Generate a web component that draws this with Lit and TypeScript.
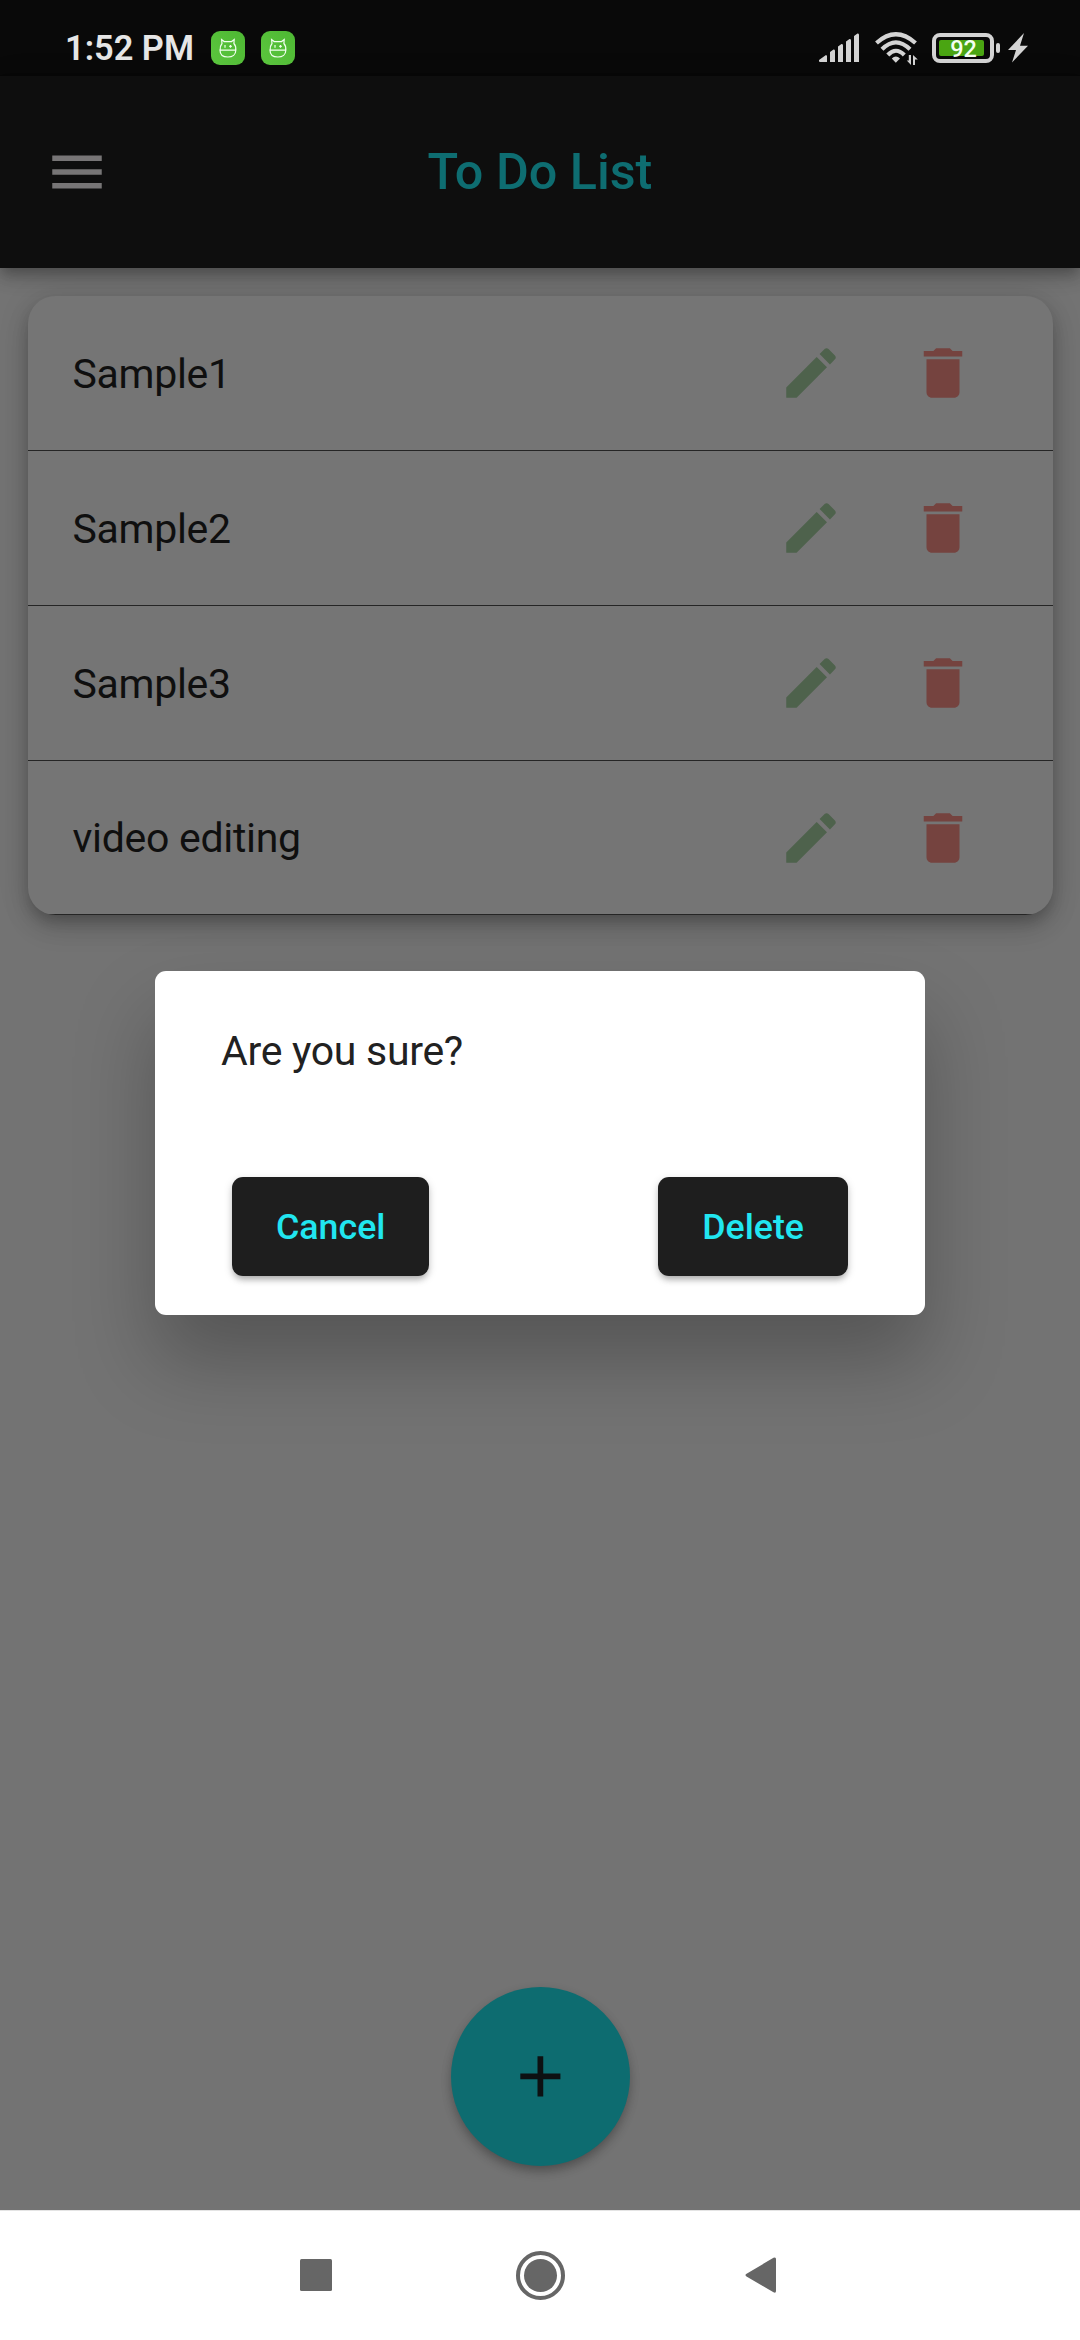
import { LitElement, html, css, svg } from "lit";
import { customElement, property } from "lit/decorators.js";

const critter = svg`
  <path d="M9.200 19.200C8.800 16.500 9.600 14.200 11 12.500L10.600 8.600L13.200 10.600H20.600L23.200 8.600L22.900 12.500C24.400 14.200 25.100 16.500 24.700 19.200"/>
  <path d="M8.500 19.200H25.300M9 19.200C9 23.500 12.200 26 16.900 26S24.800 23.500 24.800 19.200"/>
  <path d="M14 14V16.800M19.500 14V16.800M18.200 15.400H20.800"/>`;

@customElement("status-bar")
class StatusBar extends LitElement {
  static styles = css`
    :host {
      display: flex;
      align-items: center;
      height: 76px;
      box-sizing: border-box;
      padding: 19px 52px 0 65px;
      background: #090909;
      font-family: Roboto, sans-serif;
    }
    .time {
      width: 146px;
      font-size: 34.4px;
      font-weight: 600;
      line-height: 40px;
      color: #e6e6e6;
      white-space: nowrap;
    }
    .apps { display: flex; gap: 16px; flex: 1; }
    .app { display: block; width: 34px; height: 34px; border-radius: 9px; background: linear-gradient(225deg, #4db733, #5dc83f); }
    .app svg { display: block; }
    .system { display: flex; align-items: center; height: 40px; }
    .system svg { display: block; }
    .signal { margin-right: 15px; }
    .wifi { margin-right: 14px; }
    .battery { display: flex; align-items: center; }
    .cell {
      width: 62px; height: 30px; box-sizing: border-box;
      border: 4px solid #d4d4d4; border-radius: 8px; padding: 3px;
    }
    .level {
      width: 45px; height: 16px; border-radius: 2px; background: #4aa512;
      color: #f4fff0; font-size: 23.5px; font-weight: 500; line-height: 18px;
      display: flex; justify-content: center; padding-left: 4px; box-sizing: border-box;
    }
    .tip { width: 4px; height: 10px; margin-left: 2px; border-radius: 2px; background: #d4d4d4; }
    .bolt { margin-left: 8px; }
  `;
  render() {
    return html`
      <span class="time">1:52 PM</span>
      <span class="apps">
        ${[0, 1].map(() => html`<span class="app"><svg width="34" height="34" viewBox="0 0 34 34" fill="none" stroke="#f2fff0" stroke-width="1.200">${critter}</svg></span>`)}
      </span>
      <span class="system">
        <svg class="signal" width="41" height="30" viewBox="0 0 41 30" fill="#d4d4d4">
          <path d="M0 27L7 22Q8 22 8 23.500V29H1Q0 29 0 28zM11 19L14.500 16.500Q16 16 16 18V29H11zM19 13.500L22.500 11Q24 10.500 24 12.500V29H19zM27 8.500L30.500 6Q32 5.500 32 7.500V29H27zM35 3L38.500 .5Q40 0 40 2V29H35z"/>
        </svg>
        <svg class="wifi" width="43" height="34" viewBox="0 0 43 34">
          <g fill="none" stroke="#d4d4d4" stroke-width="4.200">
            <path d="M1.500 12Q20.800-5.500 40.500 12"/>
            <path d="M7 18.300Q20.800 4.500 35 18.300"/>
            <path d="M12.800 24Q20.800 15.500 29.300 24"/>
          </g>
          <path d="M16.800 27.500Q20.800 23.300 25 27.500L20.800 31.700z" fill="#d4d4d4"/>
          <path d="M36 24V34L31.800 29.500H33.800V24zM38 34V24L42.800 28.500H40V34z" fill="#d4d4d4"/>
        </svg>
        <span class="battery"><span class="cell"><span class="level">92</span></span><span class="tip"></span></span>
        <svg class="bolt" width="20" height="30" viewBox="0 0 20 30"><path d="M16 0L0 17H8L4 29.500L20 12.800H12z" fill="#d4d4d4"/></svg>
      </span>`;
  }
}

@customElement("todo-item")
class TodoItem extends LitElement {
  @property() label = "";
  static styles = css`
    :host {
      display: flex;
      align-items: center;
      box-sizing: border-box;
      height: 155px;
      padding: 0 77px 0 45px;
      border-bottom: 1px solid #252525;
      font-family: Roboto, sans-serif;
    }
    :host(:last-of-type) { height: 154px; }
    .label { flex: 1; font-size: 41px; letter-spacing: -0.3px; line-height: 48px; color: #0f0f0f; padding-top: 1px; }
    .icon { display: block; width: 66px; height: 66px; }
    .edit { fill: #4e624c; margin-right: 66px; }
    .delete { fill: #75433f; }
  `;
  render() {
    return html`
      <span class="label">${this.label}</span>
      <svg class="icon edit" viewBox="0 0 24 24"><path d="M3 17.250V21h3.750L17.810 9.940l-3.750-3.750L3 17.250zM20.710 7.040c.39-.39.39-1.020 0-1.410l-2.340-2.340c-.39-.39-1.020-.39-1.410 0l-1.830 1.830 3.750 3.750 1.830-1.830z"/></svg>
      <svg class="icon delete" viewBox="0 0 24 24"><path d="M6 19c0 1.100.9 2 2 2h8c1.100 0 2-.9 2-2V7H6v12zM19 4h-3.500l-1-1h-5l-1 1H5v2h14V4z"/></svg>`;
  }
}

@customElement("confirm-dialog")
class ConfirmDialog extends LitElement {
  static styles = css`
    :host {
      display: flex;
      flex-direction: column;
      box-sizing: border-box;
      width: 770px;
      height: 344px;
      padding: 56px 77px 39px 66px;
      border-radius: 11px;
      background: #fff;
      box-shadow: 0 46px 80px 0 rgba(0, 0, 0, .26);
      font-family: Roboto, sans-serif;
    }
    .message { flex: 1; font-size: 41px; letter-spacing: -0.3px; line-height: 48px; color: #212121; }
    .actions { display: flex; justify-content: space-between; padding-left: 11px; }
    .button {
      height: 99px;
      padding: 0 44px;
      border: 0;
      border-radius: 11px;
      background: #1e1e1e;
      color: #21e6f0;
      font: 500 35.75px Roboto, sans-serif;
      box-shadow: 0 5px 6px -2px rgba(0, 0, 0, .22), 0 3px 8px 0 rgba(0, 0, 0, .18);
    }
  `;
  render() {
    return html`
      <div class="message">Are you sure?</div>
      <div class="actions">
        <button class="button">Cancel</button>
        <button class="button">Delete</button>
      </div>`;
  }
}

@customElement("app-root")
class AppRoot extends LitElement {
  private items = ["Sample1", "Sample2", "Sample3", "video editing"];
  static styles = css`
    :host {
      display: flex;
      flex-direction: column;
      position: relative;
      width: 1080px;
      height: 2340px;
      background: #737373;
      overflow: hidden;
      font-family: Roboto, sans-serif;
    }
    .header {
      display: grid;
      grid-template-columns: 66px 1fr 66px;
      align-items: center;
      box-sizing: border-box;
      height: 192px;
      padding: 0 44px;
      background: #0e0e0e;
      box-shadow: 0 5px 11px -3px rgba(0, 0, 0, .2), 0 11px 14px 0 rgba(0, 0, 0, .14), 0 3px 27px 0 rgba(0, 0, 0, .12);
    }
    .menu { display: block; width: 66px; height: 66px; fill: #777576; }
    .title { margin: 0; text-align: center; font-size: 50.3px; font-weight: 500; line-height: 58px; color: #0e6d71; }
    .content { flex: 1; padding: 28px 27.5px 0; }
    .list {
      border-radius: 27.5px;
      overflow: hidden;
      background: #757575;
      box-shadow: 0 8px 14px -3px rgba(0, 0, 0, .2), 0 14px 27px 0 rgba(0, 0, 0, .12), 0 3px 32px 0 rgba(0, 0, 0, .12);
    }
    .add {
      display: flex;
      align-items: center;
      justify-content: center;
      align-self: center;
      width: 179px;
      height: 179px;
      margin-bottom: 44px;
      padding: 0;
      border: 0;
      border-radius: 50%;
      background: #0d6c70;
      box-shadow: 0 6px 12px -2px rgba(0, 0, 0, .28), 0 4px 12px 0 rgba(0, 0, 0, .1);
    }
    .plus { display: block; width: 68.75px; height: 68.75px; fill: #0d1112; }
    .nav {
      box-sizing: border-box;
      height: 130px;
      padding: 0 303px 1px 300px;
      border-top: 1px solid #e4e4e4;
      background: #fff;
      display: flex;
      align-items: center;
      justify-content: space-between;
      fill: #666;
    }
    .nav svg { display: block; }
    .nav .home { margin-left: 4px; }
    .dialog { position: absolute; left: 155px; top: 971px; }
  `;
  render() {
    return html`
      <status-bar></status-bar>
      <header class="header">
        <svg class="menu" viewBox="0 0 24 24"><path d="M3 18h18v-2H3v2zm0-5h18v-2H3v2zm0-7v2h18V6H3z"/></svg>
        <h1 class="title">To Do List</h1>
      </header>
      <main class="content">
        <div class="list">${this.items.map((label) => html`<todo-item .label=${label}></todo-item>`)}</div>
      </main>
      <button class="add" aria-label="Add"><svg class="plus" viewBox="0 0 24 24"><path d="M19 13h-6v6h-2v-6H5v-2h6V5h2v6h6v2z"/></svg></button>
      <nav class="nav">
        <svg width="32" height="32"><rect width="32" height="32" rx="1.500"/></svg>
        <svg class="home" width="49" height="49"><circle cx="24.500" cy="24.500" r="22.500" fill="none" stroke="#666" stroke-width="4"/><circle cx="24.500" cy="24.500" r="16.500"/></svg>
        <svg width="32" height="38"><path d="M2 17.500L28.500 1.800Q31 .8 31 3V35Q31 37.500 28.500 36.300L1.500 20.400Q-.8 19 2 17.500z"/></svg>
      </nav>
      <confirm-dialog class="dialog"></confirm-dialog>`;
  }
}
